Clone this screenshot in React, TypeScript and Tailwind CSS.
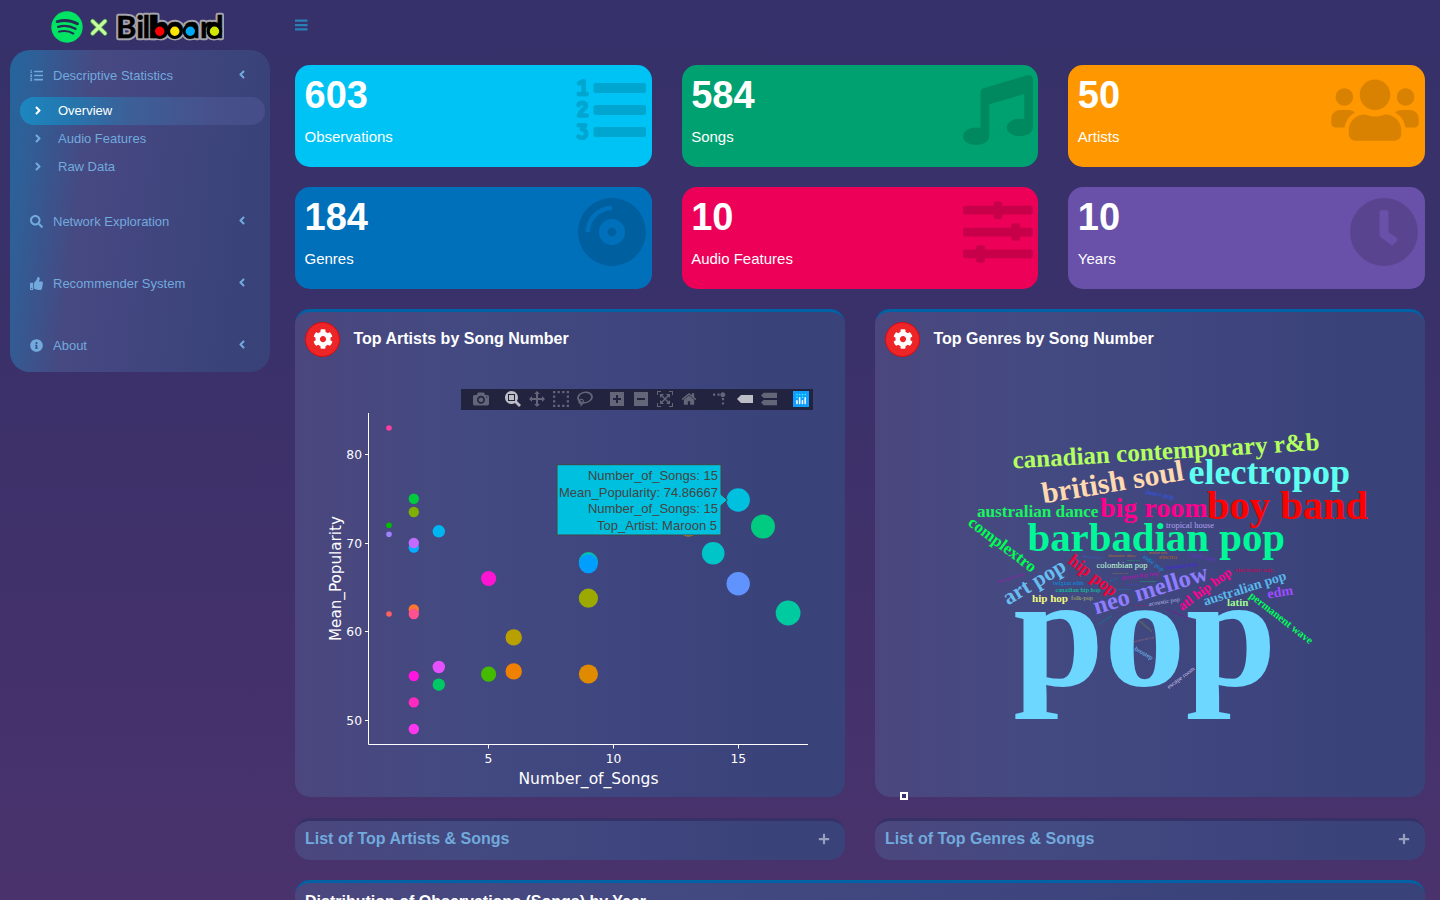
import React from "react";
import {
  FaAngleLeft,
  FaAngleRight,
  FaClock,
  FaCog,
  FaCompactDisc,
  FaInfoCircle,
  FaListOl,
  FaMusic,
  FaPlus,
  FaSearch,
  FaSlidersH,
  FaThumbsUp,
  FaUsers,
} from "react-icons/fa";

/* ---------- logo ---------- */

function Logo() {
  const xs = "116 136.2 142.4 148.2 151.6 166 184 200 206";
  return (
    <svg width="230" height="50" viewBox="0 0 230 50" className="block" aria-label="Spotify x Billboard">
      <defs>
        <filter id="soft" x="-10%" y="-20%" width="120%" height="140%">
          <feGaussianBlur stdDeviation="0.6" />
        </filter>
      </defs>
      <circle cx="67" cy="27" r="15.7" fill="#00e363" />
      <g fill="none" stroke="#262c54" strokeLinecap="round">
        <path d="M57.2 21.6c6.6-1.9 14.2-1.2 20.2 2.2" strokeWidth="2.9" />
        <path d="M58.2 26.8c5.8-1.6 12-1 17.2 2" strokeWidth="2.4" />
        <path d="M59 31.7c5-1.2 10.2-.7 14.4 1.9" strokeWidth="1.9" />
      </g>
      <g strokeLinecap="round">
        <path d="M92.600 21.200L105 33.400M105 21.200L92.600 33.400" stroke="#4f9a50" strokeWidth="4.800" />
        <path d="M92.600 21.200L105 33.400M105 21.200L92.600 33.400" stroke="#c4ff9c" strokeWidth="3.200" />
      </g>
      <g fontFamily="Lato, sans-serif" fontWeight="700" fontSize="31">
        <g filter="url(#soft)" stroke="#a5a3ac" strokeWidth="4.600" strokeLinejoin="round" fill="#a5a3ac">
          <text x={xs} y="38.300" aria-hidden="true">Billboard</text>
          <circle cx="160" cy="31" r="7" />
          <circle cx="175" cy="31" r="7" />
          <circle cx="190.500" cy="31" r="7" />
          <circle cx="214.500" cy="31" r="7" />
        </g>
        <text x={xs} y="38.300" fill="#000" stroke="#000" strokeWidth="0.500">Billboard</text>
      </g>
      <g stroke="#000" strokeWidth="3">
        <circle cx="159.700" cy="31.200" r="6.200" fill="#f00" />
        <circle cx="174.800" cy="31.200" r="6.200" fill="#ffe600" />
        <circle cx="190.300" cy="31.200" r="6.200" fill="#00a8f3" />
        <circle cx="214.500" cy="31.200" r="6.200" fill="#d0e800" />
      </g>
    </svg>
  );
}

/* ---------- sidebar ---------- */

function NavItem({ icon, label }: { icon: React.ReactNode; label: string }) {
  return (
    <div className="flex h-[34px] items-center pl-5 pr-[23px] text-[13px] text-[#72aadd]">
      <span className="w-[23px] shrink-0">{icon}</span>
      <span className="relative top-px flex-1">{label}</span>
      <FaAngleLeft className="relative -top-px h-[13px] w-[10px]" />
    </div>
  );
}

function SubItem({ label, active = false }: { label: string; active?: boolean }) {
  return (
    <div
      className={
        active
          ? "ml-2.5 mr-[5px] flex h-7 items-center rounded-full bg-[linear-gradient(90deg,#1c87c0_0%,#2378b0_18%,#3d5f98_45%,#47508b_80%,#464d88_100%)] text-[13px] text-white"
          : "ml-2.5 mr-[5px] flex h-7 items-center text-[13px] text-[#72aadd]"
      }
    >
      <FaAngleRight className="relative -top-px ml-[13px] h-[13px] w-[10px]" />
      <span className="ml-[15px]">{label}</span>
    </div>
  );
}

function Sidebar() {
  return (
    <nav className="ml-2.5 h-[322px] w-[260px] shrink-0 rounded-[20px] bg-[linear-gradient(97deg,#25659d_0%,#2f5f97_9%,#464982_29%,#434680_48%,#39437a_85%,#384278_100%)] pt-2">
      <NavItem icon={<FaListOl className="h-[13px] w-[13px]" />} label="Descriptive Statistics" />
      <div className="mb-[23px] mt-[5px]">
        <SubItem label="Overview" active />
        <SubItem label="Audio Features" />
        <SubItem label="Raw Data" />
      </div>
      <div className="flex flex-col gap-7">
        <NavItem icon={<FaSearch className="h-[13px] w-[13px]" />} label="Network Exploration" />
        <NavItem icon={<FaThumbsUp className="h-[13px] w-[13px]" />} label="Recommender System" />
        <NavItem icon={<FaInfoCircle className="h-[13px] w-[13px]" />} label="About" />
      </div>
    </nav>
  );
}

/* ---------- value boxes ---------- */

function NumberedList() {
  return (
    <svg width="70" height="70" viewBox="0 0 70 70">
      <g fill="currentColor">
        <rect x="17.500" y="8" width="52.500" height="10" rx="2" />
        <rect x="17.500" y="30" width="52.500" height="10" rx="2" />
        <rect x="17.500" y="52" width="52.500" height="10" rx="2" />
      </g>
      <g fill="none" stroke="currentColor" strokeWidth="4.600" strokeLinecap="round" strokeLinejoin="round">
        <path d="M3.200 8.300L6.500 6.400H7.600V18.800M2.800 19.100H10.700" />
        <path d="M2.600 30.100C3 27.100 9.900 26.900 9.900 30.800C9.900 34.100 4.200 35.500 2.900 40.500H10.800" />
        <path d="M2.600 50.200H9.300L6 54.300C11.800 54.300 11.300 62.900 6.300 62.900C4.300 62.900 3.500 62.400 2.600 61.600" />
      </g>
    </svg>
  );
}

interface BoxProps {
  value: string;
  label: string;
  tone: string;
  icon: React.ReactNode;
}

function ValueBox({ value, label, tone, icon }: BoxProps) {
  return (
    <div className={`flex h-[102px] items-start justify-between rounded-[15px] pl-[9.5px] pt-[9px] text-white ${tone}`}>
      <div>
        <div className="text-[38px] font-bold leading-[42px]">{value}</div>
        <div className="mt-2.5 text-[15px] leading-[21px]">{label}</div>
      </div>
      <div className="pt-px text-black/15">{icon}</div>
    </div>
  );
}

function ValueBoxes() {
  return (
    <div className="grid grid-cols-3 gap-x-[30px] gap-y-5">
      <ValueBox value="603" label="Observations" tone="bg-[#00c3f5]" icon={<div className="mr-[6px]"><NumberedList /></div>} />
      <ValueBox value="584" label="Songs" tone="bg-[#00a170]" icon={<FaMusic className="mr-[5px] h-[70px] w-[70px]" />} />
      <ValueBox value="50" label="Artists" tone="bg-[#ff9800]" icon={<FaUsers className="mr-[5.5px] h-[70px] w-[88px]" />} />
      <ValueBox value="184" label="Genres" tone="bg-[#0070bb]" icon={<FaCompactDisc className="mr-[5px] h-[70px] w-[70px]" />} />
      <ValueBox value="10" label="Audio Features" tone="bg-[#ec0058]" icon={<FaSlidersH className="mr-[5px] h-[70px] w-[70px]" />} />
      <ValueBox value="10" label="Years" tone="bg-[#6951aa]" icon={<FaClock className="mr-[6px] h-[70px] w-[70px]" />} />
    </div>
  );
}

/* ---------- chart toolbar ---------- */

const ICONS = {
  camera: {
    w: 1000,
    d: "m500 450c-83 0-150-67-150-150 0-83 67-150 150-150 83 0 150 67 150 150 0 83-67 150-150 150z m400 150h-120c-16 0-34 13-39 29l-31 93c-6 15-23 28-40 28h-340c-16 0-34-13-39-28l-31-94c-6-15-23-28-40-28h-120c-55 0-100-45-100-100v-450c0-55 45-100 100-100h800c55 0 100 45 100 100v450c0 55-45 100-100 100z m-400-550c-138 0-250 112-250 250 0 138 112 250 250 250 138 0 250-112 250-250 0-138-112-250-250-250z m365 380c-19 0-35 16-35 35 0 19 16 35 35 35 19 0 35-16 35-35 0-19-16-35-35-35z",
  },
  zoom: {
    w: 1000,
    d: "m1000-25l-250 251c40 63 63 138 63 218 0 224-182 406-407 406-224 0-406-182-406-406s183-406 407-406c80 0 155 22 218 62l250-250 125 125z m-812 250l0 438 437 0 0-438-437 0z m62 375l313 0 0-312-313 0 0 312z",
  },
  pan: {
    w: 1000,
    d: "m1000 350l-187 188 0-125-250 0 0 250 125 0-188 187-187-187 125 0 0-250-250 0 0 125-188-188 186-187 0 125 252 0 0-250-125 0 187-188 188 188-125 0 0 250 250 0 0-126 187 188z",
  },
  select: {
    w: 1000,
    d: "m0 850h143v-143h-143z m286 0h143v-143h-143z m285 0h143v-143h-143z m286 0h143v-143h-143z m-857-286h143v-143h-143z m857 0h143v-143h-143z m-857-285h143v-143h-143z m857 0h143v-143h-143z m-857-286h143v-143h-143z m286 0h143v-143h-143z m285 0h143v-143h-143z m286 0h143v-143h-143z",
  },
  lasso: {
    w: 1031,
    d: "m1018 538c-36 207-290 336-568 286-277-48-473-256-436-463 10-57 36-108 76-151-13-66 11-137 68-183 34-28 75-41 114-42l-55-70 0 0c-2-1-3-2-4-3-10-14-8-34 5-45 14-11 34-8 45 4 1 1 2 3 2 5l0 0 113 140c16 11 31 24 45 40 4 3 6 7 8 11 48-3 100 0 151 9 278 48 473 255 436 462z m-624-379c-80 14-149 48-197 96 42 42 109 47 156 9 33-26 47-66 41-105z m-187-74c-19 16-33 37-39 60 50-32 109-55 174-68-42-25-95-24-135 8z m360 75c-34-7-69-9-102-8 8 62-16 128-68 170-73 59-175 54-244-5-9 20-16 40-20 61-28 159 121 317 333 354s407-60 434-217c28-159-121-318-333-355z",
  },
  plus: {
    w: 875,
    d: "m1 787l0-875 875 0 0 875-875 0z m687-500l-187 0 0-187-125 0 0 187-188 0 0 125 188 0 0 187 125 0 0-187 187 0 0-125z",
  },
  minus: {
    w: 875,
    d: "m0 788l0-876 875 0 0 876-875 0z m688-500l-500 0 0 125 500 0 0-125z",
  },
  autoscale: {
    w: 1000,
    d: "m250 850l-187 0-63 0 0-62 0-188 63 0 0 188 187 0 0 62z m688 0l-188 0 0-62 188 0 0-188 62 0 0 188 0 62-62 0z m-875-938l0 188-63 0 0-188 0-62 63 0 187 0 0 62-187 0z m875 188l0-188-188 0 0-62 188 0 62 0 0 62 0 188-62 0z m-125 188l-1 0-93-94-156 156 156 156 92-93 2 0 0 250-250 0 0-2 93-92-156-156-156 156 94 92 0 2-250 0 0-250 0 0 93 93 157-156-157-156-93 94 0 0 0-250 250 0 0 0-94 93 156 157 156-157-93-93 0 0 250 0 0 250z",
  },
  home: {
    w: 928.6,
    d: "m786 296v-267q0-15-11-26t-25-10h-214v214h-143v-214h-214q-15 0-25 10t-11 26v267q0 1 0 2t0 2l321 264 321-264q1-1 1-4z m124 39l-34-41q-5-5-12-6h-2q-7 0-12 3l-386 322-386-322q-7-4-13-4-7 2-12 7l-35 41q-4 5-3 13t6 12l401 334q18 15 42 15t43-15l136-114v109q0 8 5 13t13 5h107q8 0 13-5t5-13v-227l122-102q5-5 6-12t-4-13z",
  },
  closest: { w: 1500, d: "m375 725l0 0-375-375 375-374 0-1 1125 0 0 750-1125 0z" },
  compare: {
    w: 1125,
    d: "m187 786l0 2-187-188 188-187 0 0 937 0 0 373-938 0z m0-499l0 1-187-188 188-188 0 0 937 0 0 376-938-1z",
  },
};

function Tool({ name, active = false }: { name: keyof typeof ICONS; active?: boolean }) {
  const icon = ICONS[name];
  return (
    <span className={active ? "px-1 text-white/70" : "px-1 text-white/30"}>
      <svg width="16" height="16" viewBox={`0 0 ${icon.w} 1000`} className="block">
        <path d={icon.d} transform="matrix(1 0 0 -1 0 850)" fill="currentColor" />
      </svg>
    </span>
  );
}

function Toolbar() {
  return (
    <div className="ml-[166px] flex h-[21px] w-[352px] bg-[#22233f] pt-[2px]">
      <div className="flex pl-2">
        <Tool name="camera" />
      </div>
      <div className="flex pl-2">
        <Tool name="zoom" active />
        <Tool name="pan" />
        <Tool name="select" />
        <Tool name="lasso" />
      </div>
      <div className="flex pl-2">
        <Tool name="plus" />
        <Tool name="minus" />
        <Tool name="autoscale" />
        <Tool name="home" />
      </div>
      <div className="flex pl-2">
        <span className="px-1 text-white/30">
          <svg width="16" height="16" viewBox="0 0 1000 1000" className="block">
            <path
              d="M512 409c0-57-46-104-103-104-57 0-104 47-104 104 0 57 47 103 104 103 57 0 103-46 103-103z m-327-39l92 0 0 92-92 0z m-185 0l92 0 0 92-92 0z m370-186l92 0 0 93-92 0z m0-184l92 0 0 92-92 0z"
              transform="matrix(1.5 0 0 -1.5 0 850)"
              fill="currentColor"
            />
          </svg>
        </span>
        <Tool name="closest" active />
        <Tool name="compare" />
      </div>
      <div className="flex pl-2">
        <span className="px-1">
          <svg width="16" height="16" viewBox="0 0 16 16" className="block">
            <rect width="16" height="16" fill="#119dff" />
            <g fill="#25fefd">
              <circle cx="4" cy="3.600" r=".8" />
              <circle cx="6.700" cy="3.600" r=".8" />
              <circle cx="9.400" cy="3.600" r=".8" />
              <circle cx="12.200" cy="3.600" r=".8" />
              <circle cx="4" cy="6.400" r=".8" />
              <circle cx="9.400" cy="6.400" r=".8" />
            </g>
            <g fill="#fff">
              <rect x="3.200" y="9" width="1.500" height="4.200" rx=".7" />
              <rect x="5.900" y="6" width="1.500" height="7.200" rx=".7" />
              <rect x="8.700" y="9" width="1.500" height="4.200" rx=".7" />
              <rect x="11.400" y="6" width="1.500" height="7.200" rx=".7" />
            </g>
          </svg>
        </span>
      </div>
    </div>
  );
}

/* ---------- scatter chart ---------- */

const POINTS: [number, number, number, string][] = [
  [389, 428, 2.8, "#ff3d9e"],
  [413.8, 498.8, 5.2, "#00cb3e"],
  [413.8, 512, 5.2, "#7fb000"],
  [389, 525.3, 2.8, "#00bf00"],
  [389, 534.2, 2.8, "#a080ff"],
  [438.8, 531.3, 6.2, "#00b6f0"],
  [413.8, 547.6, 5.2, "#00b0ff"],
  [413.8, 543, 5.2, "#c46bff"],
  [389, 614, 2.8, "#ff6060"],
  [413.8, 609.5, 5.2, "#ff7733"],
  [413.8, 614, 5.2, "#ff5090"],
  [413.8, 676, 5.2, "#ff14e0"],
  [413.8, 702.4, 5.2, "#ff2abf"],
  [413.8, 729, 5.2, "#ff36f0"],
  [438.8, 667, 6.2, "#e650ff"],
  [438.8, 684.7, 6.2, "#00c864"],
  [488.6, 578.5, 7.6, "#ff14d2"],
  [488.6, 674.1, 7.6, "#45bb00"],
  [513.7, 637.4, 8.2, "#b8a000"],
  [513.7, 671.4, 8.2, "#f08000"],
  [588.4, 561.6, 9.5, "#00c1ae"],
  [588.4, 563.8, 9.5, "#009fff"],
  [588.4, 598.2, 9.6, "#9caa00"],
  [588.4, 674, 9.6, "#e08a00"],
  [688.2, 525.5, 11, "#cf9400"],
  [713.2, 553.2, 11.3, "#00c5c8"],
  [738.2, 500, 11.7, "#00c0df"],
  [738.2, 583.8, 11.7, "#6193ff"],
  [763, 526.4, 12, "#00cb80"],
  [788.1, 613, 12.4, "#00cba0"],
];

function Scatter() {
  return (
    <svg width="550" height="387" viewBox="295 410 550 387" className="block">
      {POINTS.map(([x, y, r, c], i) => (
        <circle key={i} cx={x} cy={y} r={r} fill={c} />
      ))}
      <path
        d="M368.500 413V744.500H808M365 454.500h3M365 543.500h3M365 631.500h3M365 720.500h3M488.500 745v3.500M613.500 745v3.500M738.500 745v3.500"
        fill="none"
        stroke="#fff"
        strokeWidth="1"
      />
      <g fill="#fff" fontFamily="'DejaVu Sans', Verdana, sans-serif">
        <g fontSize="12.300" textAnchor="end">
          <text x="362" y="459">80</text>
          <text x="362" y="548">70</text>
          <text x="362" y="636">60</text>
          <text x="362" y="725">50</text>
        </g>
        <g fontSize="12.300" textAnchor="middle">
          <text x="488.500" y="763">5</text>
          <text x="613.500" y="763">10</text>
          <text x="738.300" y="763">15</text>
        </g>
        <text x="518.500" y="784" fontSize="15.700" textLength="140" lengthAdjust="spacingAndGlyphs">Number_of_Songs</text>
        <text transform="translate(340.500 641) rotate(-90)" fontSize="15.700" textLength="125" lengthAdjust="spacingAndGlyphs">
          Mean_Popularity
        </text>
      </g>
      <path d="M557 464.700H721V494.500L727.500 500L721 505.500V535H557Z" fill="#00c0df" stroke="#444" strokeWidth="1" />
      <g fill="#444" fontSize="13" fontFamily="'Liberation Sans', Arial, sans-serif" textAnchor="end">
        <text x="718" y="480">Number_of_Songs: 15</text>
        <text x="718" y="497">Mean_Popularity: 74.86667</text>
        <text x="718" y="513">Number_of_Songs: 15</text>
        <text x="717" y="530">Top_Artist: Maroon 5</text>
      </g>
    </svg>
  );
}

/* ---------- word cloud ---------- */

const EM: Record<string, number> = {
  a: 0.5, b: 0.556, c: 0.444, d: 0.556, e: 0.444, f: 0.333, g: 0.5, h: 0.556, i: 0.278, k: 0.556, l: 0.278,
  m: 0.833, n: 0.556, o: 0.5, p: 0.556, q: 0.556, r: 0.444, s: 0.389, t: 0.333, u: 0.556, v: 0.5, w: 0.722,
  x: 0.5, y: 0.5, " ": 0.25, "&": 0.833, "-": 0.333,
};

// text, baseline start x/y, baseline end x/y, colour
const WORDS: [string, number, number, number, number, string][] = [
  ["pop", 1013.2, 685.2, 1276.5, 685.2, "#6dd7ff"],
  ["canadian contemporary r&b", 1013, 468.5, 1320, 450, "#b4ff60"],
  ["british soul", 1043.5, 503.5, 1185, 480, "#ffd9b0"],
  ["electropop", 1188.5, 484, 1350, 484, "#5cfff0"],
  ["australian dance", 977, 517, 1098.5, 517, "#18f560"],
  ["big room", 1100, 517, 1207.5, 517, "#ff008c"],
  ["boy band", 1207, 518.8, 1368, 518.8, "#ff0000"],
  ["barbadian pop", 1027.5, 551, 1285, 551, "#00f898"],
  ["tropical house", 1166, 528.3, 1214, 528.3, "#b0a0f0"],
  ["complextro", 967, 524.5, 1031.5, 573, "#00ff50"],
  ["art pop", 1008, 605.5, 1067.5, 570, "#68bdf0"],
  ["hip pop", 1067, 562.5, 1112, 597, "#f80038"],
  ["colombian pop", 1096.5, 568.3, 1147.5, 568.3, "#c0ffd8"],
  ["neo mellow", 1096, 614.5, 1209.5, 579.5, "#8f7cff"],
  ["atl hip hop", 1182, 611, 1232.5, 574, "#ff0090"],
  ["australian pop", 1205, 605.7, 1287, 579.5, "#58b8ea"],
  ["edm", 1268, 598.5, 1293.5, 594.5, "#a04cff"],
  ["latin", 1227, 606, 1248.5, 606, "#a0fa90"],
  ["permanent wave", 1248.5, 597, 1309.5, 644.5, "#00ff58"],
  ["hip hop", 1032, 602.3, 1068, 602.3, "#f0f880"],
  ["folk-pop", 1071, 599.6, 1093, 599.6, "#a8b860"],
  ["canadian hip hop", 1055.5, 591.5, 1100.5, 591.5, "#00d8a0"],
  ["belgian edm", 1053, 585, 1083.5, 585, "#0090e0"],
  ["detroit hip hop", 1121.7, 580, 1159, 575, "#c800b8"],
  ["baroque pop", 1166, 569.5, 1198, 565.5, "#4420e0"],
  ["electro", 1159, 559, 1177, 559, "#b06018"],
  ["candy pop", 1188.5, 556, 1215, 561, "#6a30c8"],
  ["indie pop", 1142.5, 557.5, 1162, 571.5, "#009ae0"],
  ["electronic trap", 1235, 571.5, 1273, 571.5, "#d00050"],
  ["acoustic pop", 1149, 606, 1180, 601, "#b8b8ea"],
  ["escape room", 1169, 689, 1195, 669.5, "#d8c8ea"],
  ["brostep", 1134, 650, 1151.5, 660, "#70c8fa"],
  ["dance pop", 1145, 493.5, 1173.5, 499.5, "#3058f0"],
  ["deep tropical house", 997.5, 583, 1024, 575, "#c000c0"],
  ["danish pop music", 1082, 557, 1102, 559, "#3068d0"],
  ["alternative dance", 1108, 557, 1136, 557, "#b87020"],
  ["country rap", 1127, 561, 1140, 561, "#00b840"],
  ["modern rock", 1149, 553.5, 1167, 553.5, "#c07030"],
  ["conscious rap", 1112, 573.5, 1128, 573.5, "#a07840"],
  ["emo rap", 1110, 582, 1117, 579, "#0090a0"],
  ["big beat pop", 1126, 585, 1140, 585, "#4444d8"],
  ["latin trap pop", 1140, 581.5, 1156, 581.5, "#00c840"],
  ["bedroom pop", 1116, 589.5, 1131, 589.5, "#0088c8"],
  ["dirty south rap", 1133, 605.5, 1148, 605.5, "#d00060"],
  ["chicago rap music", 1167, 610, 1189, 619, "#9000a0"],
  ["chamber pop", 1099, 625.5, 1112, 616, "#009090"],
  ["folktronica", 1138, 621, 1151, 632, "#709040"],
  ["brooklyn drill rap", 1134, 642.5, 1154, 638, "#b87878"],
];

function WordCloud() {
  return (
    <svg width="550" height="425" viewBox="875 372 550 425" className="block">
      <g fontFamily="'Liberation Serif', 'Times New Roman', serif">
        {WORDS.map(([text, x1, y1, x2, y2, color]) => {
          const length = Math.hypot(x2 - x1, y2 - y1);
          const ems = [...text].reduce((sum, ch) => sum + (EM[ch] ?? 0.5), 0);
          const angle = (Math.atan2(y2 - y1, x2 - x1) * 180) / Math.PI;
          const size = length / ems;
          return (
            <text
              key={text}
              transform={`translate(${x1} ${y1}) rotate(${angle})`}
              fontSize={size > 100 ? size * 0.968 : size}
              fontWeight={size < 9 ? 400 : 700}
              textLength={length}
              lengthAdjust="spacingAndGlyphs"
              fill={color}
            >
              {text}
            </text>
          );
        })}
      </g>
    </svg>
  );
}

/* ---------- panels ---------- */

function PanelHeader({ title }: { title: string }) {
  return (
    <div className="flex h-[60px] items-start pl-2.5 pt-[9.5px]">
      <button className="flex h-[35px] w-[35px] items-center justify-center rounded-full border border-[#d80a10] bg-[#ee2526]">
        <FaCog className="h-[20px] w-[20px] text-white" />
      </button>
      <h3 className="ml-[13.5px] mt-[5px] text-[16px] font-bold leading-6 text-white">{title}</h3>
    </div>
  );
}

function Panel({ children }: { children: React.ReactNode }) {
  return (
    <section className="h-[488px] overflow-hidden rounded-[15px] border-t-[3px] border-[#0062a5] bg-[linear-gradient(90deg,#4b467e_0%,#434a81_30%,#3f467f_60%,#3a427a_88%,#394279_100%)]">
      {children}
    </section>
  );
}

function CollapsedPanel({ title }: { title: string }) {
  return (
    <section className="flex h-[42px] items-center justify-between rounded-[15px] border-t-[3px] border-[#363268] bg-[linear-gradient(90deg,#4b467e_0%,#434a81_30%,#3f467f_60%,#3a427a_88%,#394279_100%)] pb-[3px] pl-2.5 pr-[15.5px] text-[16px] font-bold text-[#72aadd]">
      <span>{title}</span>
      <FaPlus className="h-3 w-3 text-[#97a0bd]" />
    </section>
  );
}

export default function App() {
  return (
    <div className="h-[900px] w-[1440px] overflow-hidden bg-[linear-gradient(180deg,#36316a_0%,#3a316a_35%,#41316b_65%,#4a336d_100%)] font-['Liberation_Sans',Arial,sans-serif]">
      <header className="flex h-[50px] items-center">
        <Logo />
        <svg width="13" height="12" viewBox="0 0 13 12" className="ml-[65px] text-[#2a80b5]">
          <path d="M0 0.500h12.500v2.200H0zM0 5h12.500v2.200H0zM0 9.300h12.500v2.200H0z" fill="currentColor" />
        </svg>
      </header>
      <div className="flex">
        <Sidebar />
        <main className="ml-[25px] mt-[15px] w-[1130px]">
          <ValueBoxes />
          <div className="mt-5 grid grid-cols-2 gap-x-[30px] gap-y-[21px]">
            <Panel>
              <PanelHeader title="Top Artists by Song Number" />
              <div className="pt-[17px]">
                <Toolbar />
              </div>
              <Scatter />
            </Panel>
            <div className="relative">
              <Panel>
                <PanelHeader title="Top Genres by Song Number" />
                <WordCloud />
              </Panel>
              <span className="absolute bottom-[-3px] left-[25px] h-2 w-2 border-2 border-white bg-[#36316a]" />
            </div>
            <CollapsedPanel title="List of Top Artists & Songs" />
            <CollapsedPanel title="List of Top Genres & Songs" />
          </div>
          <section className="mt-5 h-[120px] rounded-t-[15px] border-t-[3px] border-[#0062a5] bg-[linear-gradient(90deg,#4b467e_0%,#434a81_30%,#3f467f_60%,#3a427a_88%,#394279_100%)] pl-2.5 pt-[7px]">
            <h3 className="text-[16px] font-bold leading-6 text-white">Distribution of Observations (Songs) by Year</h3>
          </section>
        </main>
      </div>
    </div>
  );
}
